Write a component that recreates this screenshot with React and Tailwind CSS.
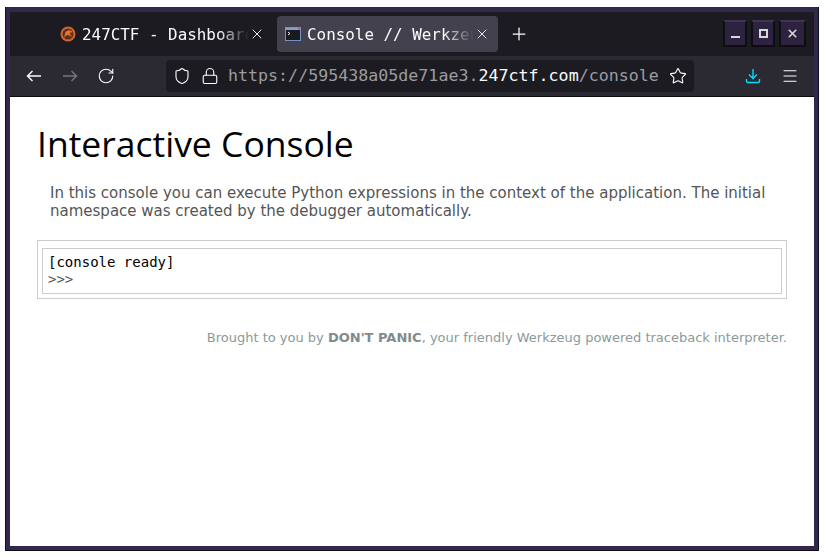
import { RotateCw, Shield, Lock, Star, X, Plus, Menu } from "lucide-react";

const Tab = ({ title, icon, active }) => (
    <div className={`flex items-center w-[221px] h-9 pl-2 pr-2 rounded ${active ? 'bg-[#42414d]' : ''}`}>
        <div className="w-4 h-4 shrink-0">{icon}</div>
        <div className="ml-[6px] pt-px w-[167px] overflow-hidden whitespace-nowrap text-[15.9px] text-[#fbfbfe] font-['DejaVu_Sans_Mono',monospace] [mask-image:linear-gradient(to_right,black_136px,transparent_167px)]">
            {title}
        </div>
        <X size={16} strokeWidth={1.5} className="ml-auto text-[#e8e8ec]" />
    </div>
)

const CtfIcon = () => (
    <svg width="16" height="16" viewBox="0 0 16 16">
        <circle cx="8" cy="8" r="7.5" fill="#d9642a" />
        <circle cx="8" cy="8" r="5.5" fill="#5a3020" />
        <path d="M4 12 L5.5 6 Q9 2.5 13 6 L9.5 7 L12 11 L8.5 9 L6 9.5 Z" fill="#e8742f" />
    </svg>
)

const ConsoleIcon = () => (
    <svg width="16" height="16" viewBox="0 0 16 16">
        <rect x="0.5" y="1.5" width="15" height="13" fill="#1a1a1e" stroke="#6f94c6" />
        <rect x="1" y="2" width="14" height="2" fill="#7fa3d4" />
        <rect x="13" y="2" width="2" height="1.5" fill="#d9534f" />
        <path d="M3 6 L5 7.5 L3 9" fill="none" stroke="#e8e8e8" strokeWidth="1" />
    </svg>
)

const WinButton = ({ children, wide }) => (
    <div className={`flex items-center justify-center h-[27px] ${wide ? 'w-[27px]' : 'w-6'} bg-[#2d2240] border-2 border-[#0d0d12] border-t-[#3f3358] text-[#d8d8d8]`}>
        {children}
    </div>
)

const App = () => {
    return (
        <div className="w-[824px] h-[556px] bg-white pt-[7px] pl-[5px]">
            <div className="w-[814px] h-[544px] flex flex-col border-r border-b border-l border-[#0f0e14] bg-[#33284c] pt-[5px] pb-1 px-1">
                {/* tab strip */}
                <div className="flex items-center h-11 bg-[#1c1b22] shrink-0">
                    <div className="flex items-center ml-[42px]">
                        <Tab title="247CTF - Dashboard" icon={<CtfIcon />} />
                        <div className="w-[4px]" />
                        <Tab title="Console // Werkzeug" icon={<ConsoleIcon />} active />
                    </div>
                    <Plus size={20} strokeWidth={1.5} className="ml-[11px] text-[#fbfbfe]" />
                    <div className="flex gap-1 ml-[194px] -mt-px">
                        <WinButton><div className="w-[9px] h-[2px] mt-[7px] bg-[#d8d8d8]" /></WinButton>
                        <WinButton><div className="w-[9px] h-[9px] border-2 border-[#d8d8d8]" /></WinButton>
                        <WinButton wide><X size={13} strokeWidth={3} /></WinButton>
                    </div>
                </div>
                {/* toolbar */}
                <div className="flex items-center h-[41px] shrink-0 bg-[#2b2a33] border-b border-[#0c0c0d] text-[#fbfbfe]">
                    <svg width="16" height="16" viewBox="0 0 16 16" className="ml-4" fill="none" stroke="currentColor" strokeWidth="1.4">
                        <path d="M1.5 8 H15 M6.5 3 L1.5 8 L6.5 13" />
                    </svg>
                    <svg width="16" height="16" viewBox="0 0 16 16" className="ml-5 text-[#77767c]" fill="none" stroke="currentColor" strokeWidth="1.4">
                        <path d="M14.5 8 H1 M9.5 3 L14.5 8 L9.5 13" />
                    </svg>
                    <RotateCw size={18} strokeWidth={1.5} className="ml-[19px]" />
                    <div className="flex items-center ml-[51px] w-[528px] h-8 rounded bg-[#1c1b22]">
                        <Shield size={18} strokeWidth={1.5} className="ml-[7px]" />
                        <Lock size={18} strokeWidth={1.5} className="ml-[10px]" />
                        <div className="ml-[9px] pt-px whitespace-nowrap text-[16.65px] text-[#9b9ba0] font-['DejaVu_Sans_Mono',monospace]">
                            https://595438a05de71ae3.<span className="text-[#fbfbfe]">247ctf.com</span>/console
                        </div>
                        <Star size={18} strokeWidth={1.5} className="ml-auto mr-[7px]" />
                    </div>
                    <svg width="16" height="16" viewBox="0 0 16 16" className="ml-[51px] text-[#00ddff]" fill="none" stroke="currentColor" strokeWidth="1.4">
                        <path d="M8 1 V10 M4 6.5 L8 10.5 L12 6.5" />
                        <path d="M1.5 11 V13 Q1.5 14.5 3 14.5 H13 Q14.5 14.5 14.5 13 V11" />
                    </svg>
                    <Menu size={18} strokeWidth={1.5} className="ml-5" />
                </div>
                {/* page */}
                <div className="flex-1 bg-white pl-[27px] pr-[27px] font-['DejaVu_Sans',sans-serif]">
                    <h1 className="mt-[24px] text-[35.5px] leading-[44px] text-black font-['Open_Sans',sans-serif]">Interactive Console</h1>
                    <p className="mt-[19px] ml-[13px] text-[15px] leading-[18px] text-[#555]">
                        In this console you can execute Python expressions in the context of the application. The initial namespace was created by the debugger automatically.
                    </p>
                    <div className="mt-[20px] border border-[#ccc] pt-[7px] px-1 pb-1">
                        <div className="h-[46px] border border-[#ccc] px-[5px] pt-[5px] text-[14px] leading-[17px] font-['DejaVu_Sans_Mono',monospace]">
                            <div className="text-black">[console ready]</div>
                            <div className="text-[#555]">&gt;&gt;&gt;</div>
                        </div>
                    </div>
                    <p className="mt-[31px] text-right text-[13px] leading-4 text-[#8a9a9a]">
                        Brought to you by <strong className="text-[#7f8c8d]">DON'T PANIC</strong>, your friendly Werkzeug powered traceback interpreter.
                    </p>
                </div>
            </div>
        </div>
    )
}

export default App
